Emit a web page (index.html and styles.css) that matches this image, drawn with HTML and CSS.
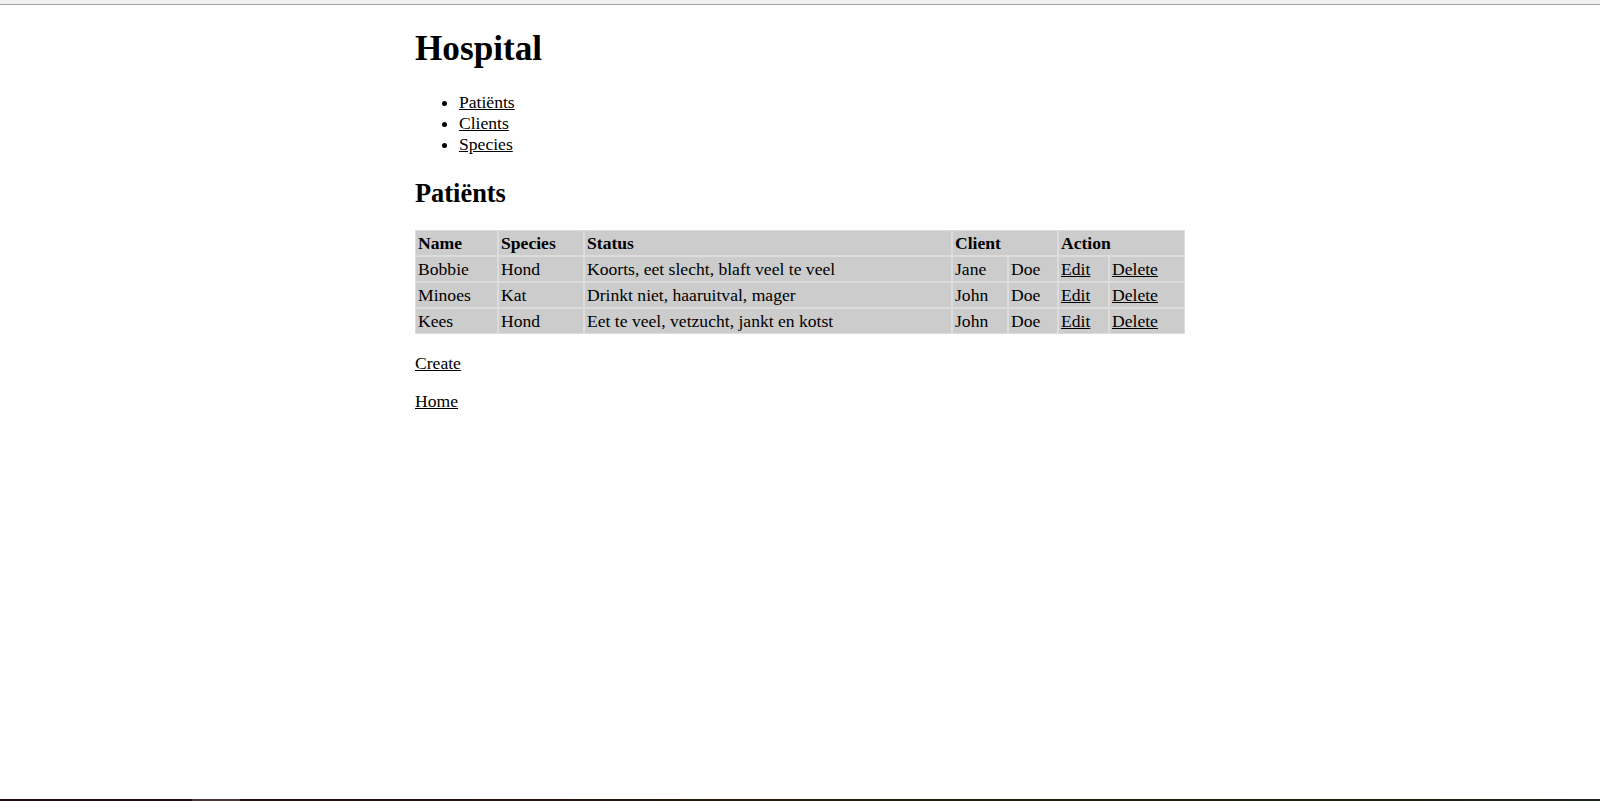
FILE: index.html
```html
<!DOCTYPE html>
<html lang="nl">
<head>
<meta charset="utf-8">
<title>Hospital</title>
<link rel="stylesheet" href="styles.css">
</head>
<body>
<div class="topbar"></div>
<div class="page">
  <h1 class="title">Hospital</h1>
  <ul class="nav">
    <li><a href="#">Patiënts</a></li>
    <li><a href="#">Clients</a></li>
    <li><a href="#">Species</a></li>
  </ul>
  <h2 class="subtitle">Patiënts</h2>
  <table class="grid">
    <colgroup>
      <col class="c-name">
      <col class="c-species">
      <col class="c-status">
      <col class="c-first">
      <col class="c-last">
      <col class="c-edit">
      <col class="c-delete">
    </colgroup>
    <thead>
      <tr><th>Name</th><th>Species</th><th>Status</th><th colspan="2">Client</th><th colspan="2">Action</th></tr>
    </thead>
    <tbody>
      <tr><td>Bobbie</td><td>Hond</td><td>Koorts, eet slecht, blaft veel te veel</td><td>Jane</td><td>Doe</td><td><a href="#">Edit</a></td><td><a href="#">Delete</a></td></tr>
      <tr><td>Minoes</td><td>Kat</td><td>Drinkt niet, haaruitval, mager</td><td>John</td><td>Doe</td><td><a href="#">Edit</a></td><td><a href="#">Delete</a></td></tr>
      <tr><td>Kees</td><td>Hond</td><td>Eet te veel, vetzucht, jankt en kotst</td><td>John</td><td>Doe</td><td><a href="#">Edit</a></td><td><a href="#">Delete</a></td></tr>
    </tbody>
  </table>
  <p class="link-line first"><a href="#">Create</a></p>
  <p class="link-line"><a href="#">Home</a></p>
</div>
<div class="taskbar"></div>
</body>
</html>
```

FILE: styles.css
```css
html, body {
  margin: 0;
  padding: 0;
  background: #ffffff;
}
body {
  font-family: "Liberation Serif", "Times New Roman", serif;
  font-size: 17.6px;
  color: #000;
}
.topbar {
  height: 4px;
  background: #f0f0f0;
  border-bottom: 1px solid #a0a0a0;
}
.page {
  width: 770px;
  margin: 0 auto;
  padding-top: 0.1px;
}
a {
  color: #000;
  text-decoration: underline;
}
.title {
  font-size: 35.2px;
  font-weight: bold;
  margin: 23.6px 0 22.6px;
  line-height: 40.5px;
}
.nav {
  margin: 22.6px 0 22.9px;
  padding-left: 44px;
  line-height: 21px;
}
.subtitle {
  font-size: 26.4px;
  font-weight: bold;
  margin: 22.9px 0 22.3px;
  line-height: 30.4px;
}
.grid {
  width: 770px;
  table-layout: fixed;
  border-collapse: separate;
  border-spacing: 0;
  line-height: 20px;
}
.grid th, .grid td {
  background: #cccccc;
  border: 1px solid #dcdcdc;
  padding: 2px 2px;
  text-align: left;
  white-space: nowrap;
}
.grid th {
  font-weight: bold;
}
.c-name { width: 83px; }
.c-species { width: 86px; }
.c-status { width: 368px; }
.c-first { width: 56px; }
.c-last { width: 50px; }
.c-edit { width: 51px; }
.c-delete { width: 76px; }
.link-line {
  margin: 17.6px 0;
  line-height: 20.3px;
}
.link-line.first {
  margin-top: 19px;
}
.taskbar {
  position: fixed;
  left: 0;
  right: 0;
  bottom: 0;
  height: 2px;
  background: linear-gradient(to right, #200a14 0%, #200a14 12%, #4a3838 12%, #4a3838 15%, #231010 15%, #241a0c 50%, #20200c 80%, #1c2418 100%);
}
```
